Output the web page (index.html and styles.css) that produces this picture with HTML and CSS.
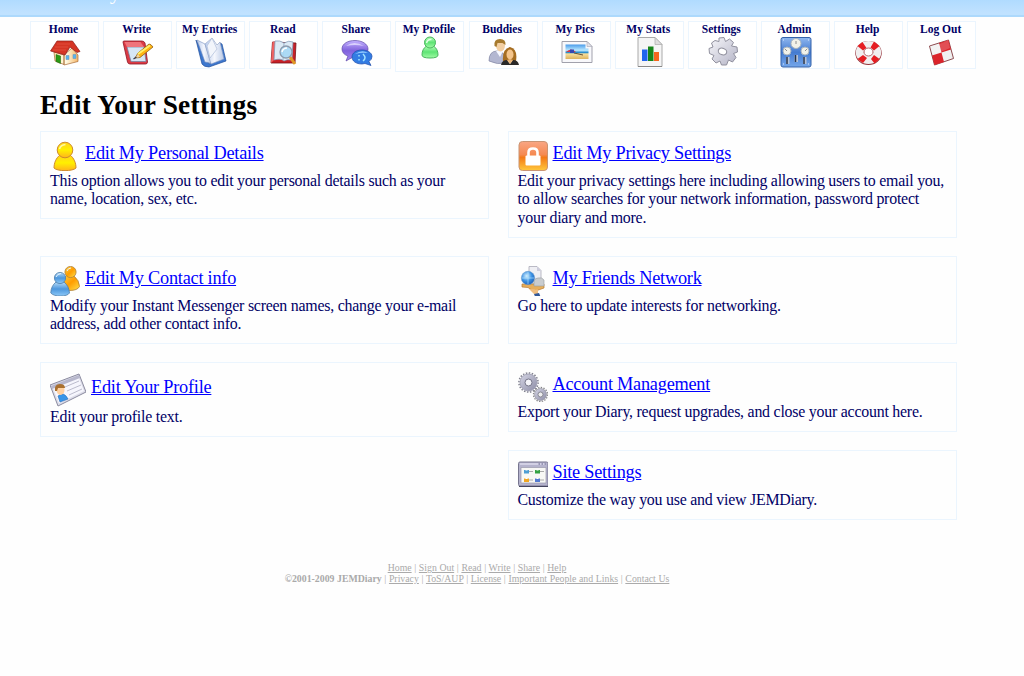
FILE: index.html
```html
<!DOCTYPE html>
<html lang="en">
<head>
<meta charset="utf-8">
<title>JEMDiary - Edit Your Settings</title>
<link rel="stylesheet" href="styles.css">
</head>
<body>
<svg class="defs" width="0" height="0" aria-hidden="true">
  <defs>
    <linearGradient id="gold" x1="0" y1="0" x2="0" y2="1"><stop offset="0" stop-color="#ffd21c"/><stop offset=".5" stop-color="#fff000"/><stop offset="1" stop-color="#ffb31c"/></linearGradient>
    <linearGradient id="amber" x1="0" y1="0" x2="1" y2="1"><stop offset="0" stop-color="#ffd24a"/><stop offset=".5" stop-color="#ff9d00"/><stop offset="1" stop-color="#ffe04a"/></linearGradient>
    <linearGradient id="sky" x1="0" y1="0" x2="0" y2="1"><stop offset="0" stop-color="#b5daf7"/><stop offset=".5" stop-color="#4d97dd"/><stop offset="1" stop-color="#8cc8f7"/></linearGradient>
    <linearGradient id="green" x1="0" y1="0" x2="0" y2="1"><stop offset="0" stop-color="#b6ffb9"/><stop offset=".5" stop-color="#5fe475"/><stop offset="1" stop-color="#a1fba5"/></linearGradient>
    <linearGradient id="orange" x1="0" y1="0" x2="0" y2="1"><stop offset="0" stop-color="#f9a684"/><stop offset=".45" stop-color="#f58a52"/><stop offset=".55" stop-color="#f47a17"/><stop offset="1" stop-color="#ffc83c"/></linearGradient>
    <linearGradient id="steel" x1="0" y1="0" x2="1" y2="1"><stop offset="0" stop-color="#f7f7fb"/><stop offset="1" stop-color="#b4b4c6"/></linearGradient>
    <linearGradient id="gear" x1="0" y1="0" x2="1" y2="1"><stop offset="0" stop-color="#d5d5e5"/><stop offset="1" stop-color="#8d8da6"/></linearGradient>
    <linearGradient id="blue" x1="0" y1="0" x2="0" y2="1"><stop offset="0" stop-color="#8fb7ef"/><stop offset=".5" stop-color="#447bd0"/><stop offset="1" stop-color="#75a7ea"/></linearGradient>
    <linearGradient id="violet" x1="0" y1="0" x2="0" y2="1"><stop offset="0" stop-color="#c2b1ff"/><stop offset=".5" stop-color="#8062dc"/><stop offset="1" stop-color="#a589f4"/></linearGradient>
    <linearGradient id="paper" x1="0" y1="0" x2="1" y2="0"><stop offset="0" stop-color="#b8cbed"/><stop offset=".5" stop-color="#f5f7fd"/><stop offset="1" stop-color="#b9c9e6"/></linearGradient>
    <radialGradient id="globe" cx=".4" cy=".35" r=".7"><stop offset="0" stop-color="#d3f0ff"/><stop offset=".55" stop-color="#3b91e3"/><stop offset="1" stop-color="#1d5cb8"/></radialGradient>
    <linearGradient id="wall" x1="0" y1="0" x2="1" y2="0"><stop offset="0" stop-color="#ffe6ad"/><stop offset=".5" stop-color="#fffbe5"/><stop offset="1" stop-color="#f5b86b"/></linearGradient>
    <linearGradient id="sea" x1="0" y1="0" x2="0" y2="1"><stop offset="0" stop-color="#499bea"/><stop offset=".4" stop-color="#bbe9ff"/><stop offset=".55" stop-color="#298ccd"/><stop offset=".65" stop-color="#f6df9b"/><stop offset="1" stop-color="#ddb35f"/></linearGradient>
  </defs>
</svg>

<header class="banner"><span class="banner-title">JEMDiary</span></header>

<nav class="tabs">
  <a class="tab"><span>Home</span>
    <svg class="icon" viewBox="0 0 30 30"><path d="M4 15 14 18v9.500L5 24zM14 18l8-7 6 7v6.500L14 28z" fill="url(#wall)" stroke="#a86a35" stroke-width=".7"/><path d="M6 17.500l4.500 1.500v7.500L6 24.500z" fill="#2b9a16" stroke="#15610b" stroke-width=".5"/><path d="M7 4h15.500l7.500 10.500-3 1-7-5.500-5 8L.5 14z" fill="#d53524" stroke="#8e1d18" stroke-width=".7"/><path d="M7 7h13M5 10h13M3 13h13" stroke="#ec6552" stroke-width=".5" fill="none"/><path d="M16 18.500h3v4h-3zM23 17.500h3v4h-3z" fill="#56b5ef" stroke="#7899b5" stroke-width=".6"/></svg></a>
  <a class="tab"><span>Write</span>
    <svg class="icon" viewBox="0 0 30 30"><path d="M0 5q0-1 1-1h18q2 0 3 2l2.500 19q0 2-2 2H7q-2 0-2.500-2z" fill="#dc3b45" stroke="#8c1524" stroke-width=".8"/><path d="M4 10h17l2 14.500H8z" fill="#d6e6f5" stroke="#6d7e9e" stroke-width=".7"/><path d="M1.500 5h16l3.500 5H4z" fill="#ef747b"/><path d="m12 21 3-5L26 7q2 0 4 3L17 20.500z" fill="#ffb411" stroke="#8f5e18" stroke-width=".8"/><path d="m15 17 12-8.500" stroke="#fff06a" stroke-width="2"/><path d="m12 21 3-4 2 3z" fill="#ead0a5"/><path d="m10.500 22 3-2" stroke="#334" stroke-width="1.200"/></svg></a>
  <a class="tab"><span>My Entries</span>
    <svg class="icon" viewBox="0 0 30 30"><path d="M0 3 6 27q2 3 7 3l17-6-4-17-2-1 2 14-13 7z" fill="#3d77ce" stroke="#214f9b" stroke-width=".7"/><path d="M1 3l8 4 6 19-6-1z" fill="url(#paper)" stroke="#7790bf" stroke-width=".6"/><path d="M9 7 16 1l5 7 3-3 4 17-13 5z" fill="url(#paper)" stroke="#899cc1" stroke-width=".6"/><path d="m16 1 5 11-7 9-3-12z" fill="#f2f5fb" stroke="#a3b3d4" stroke-width=".6"/></svg></a>
  <a class="tab"><span>Read</span>
    <svg class="icon" viewBox="0 0 30 30"><path d="M3.500 5 2 26h24l1-20z" fill="#c82027" stroke="#741319" stroke-width=".8"/><path d="m3.500 5-1.500 21 3-3L7 4z" fill="#ef6262"/><path d="M6 4q5-1 9 2 5-3 9-1l-1 18q-5-1-8 1-3-3-10-1z" fill="#dceaf5" stroke="#7993b1" stroke-width=".7"/><path d="m15 6-1 17" stroke="#92a9c2" stroke-width=".8"/><path d="m21 20 5 7" stroke="#df9926" stroke-width="3"/><circle cx="17" cy="15" r="6" fill="#a6d8f5" fill-opacity=".9" stroke="#8d9bad" stroke-width="1.300"/><path d="M13 15q1-4 5-4" stroke="#fff" stroke-width="1.500" fill="none"/></svg></a>
  <a class="tab"><span>Share</span>
    <svg class="icon" viewBox="0 0 30 30"><path d="M13 3.500C6 3.500 0 6.500 0 12q0 5 6 7l-2 5 7-4c8 0 15-2 15-8 0-5-6-8.500-13-8.500z" fill="url(#violet)" stroke="#604ba9" stroke-width=".7"/><path d="M4 9q8-6 18 0-9-2-18 0z" fill="#e5deff" opacity=".8"/><path d="M20 13c-6 0-10 3-10 7s4 7 10 7l3-.5 6 2-2-4q3-2 3-5c0-4-5-6.500-10-6.500z" fill="#327ce3" stroke="#204ca9" stroke-width=".7"/><path d="M13 17q7-5 13-1-6-1-13 1z" fill="#91c9ff"/><path d="M17 18v1.500M17 22v1.500M21 17q4 4 0 7" stroke="#a0e2ff" stroke-width="1.500" fill="none"/></svg></a>
  <a class="tab tab-current"><span>My Profile</span>
    <svg class="icon icon-small" viewBox="0 0 22 24"><path d="M14.500 10c3 2 4.500 5 4.500 9q0 3-8 3t-8-3c0-4 1.500-7 4.500-9z" fill="url(#green)" stroke="#49b65d"/><circle cx="11" cy="6.500" r="5.500" fill="url(#green)" stroke="#49b65d"/><path d="M7.500 7q1-4 5-3.500" stroke="#e4ffe4" stroke-width="1.500" fill="none"/></svg></a>
  <a class="tab"><span>Buddies</span>
    <svg class="icon" viewBox="0 0 30 30"><path d="M0 24q0-10 8-10 9 0 9 12-9 2-17-2z" fill="#b3b7d1" stroke="#8185a3" stroke-width=".7"/><path d="m7 14 4 6 3-6z" fill="#f5f7ff"/><ellipse cx="11.500" cy="8.500" rx="4.500" ry="6" fill="#f3cfa2"/><path d="M5.500 9q-1-7 5.500-7 6 0 5.500 6l-3-2-5 0-1 4z" fill="#a77a2e"/><path d="M14 24q-1-12 7-14 8 2 6 14z" fill="#a66d20"/><ellipse cx="21" cy="17.500" rx="3.500" ry="5" fill="#f4c48a"/><path d="M12 28q1-5 6-5l3 4 3-4q5 0 6 5z" fill="#292929"/><path d="m18 23 3 4 3-4-3-1z" fill="#e9b477"/></svg></a>
  <a class="tab"><span>My Pics</span>
    <svg class="icon" viewBox="0 0 30 30"><path d="M0 4.500h25l5 5v16H0z" fill="#f8f8fb" stroke="#a1a1ac"/><path d="M25 4.500v5h5z" fill="#e3e3e9" stroke="#9a9aaa" stroke-width=".5"/><path d="M3.500 7.500h20v4h3V22h-23z" fill="url(#sea)"/><path d="M4 15q5-5 10 0z" fill="#d73547"/><path d="M8 12.500h4V16H8z" fill="#3446b3"/><path d="m12 16 9 2" stroke="#665139"/></svg></a>
  <a class="tab"><span>My Stats</span>
    <svg class="icon" viewBox="0 0 30 30"><path d="M3 .5h17l7 7v22H3z" fill="#f5f5f5" stroke="#aaa"/><path d="M20 .5v7h7z" fill="#ddd" stroke="#aaa" stroke-width=".7"/><path d="M3 29.500h24" stroke="#888"/><path d="M7 12.500h5.500V24H7z" fill="#2165ef"/><path d="M13 9.500h5.500V24H13z" fill="#16851b"/><path d="M19 15h5v9h-5z" fill="#f4661f"/></svg></a>
  <a class="tab"><span>Settings</span>
    <svg class="icon" viewBox="0 0 30 30"><path d="m11 4.500 0-3.500 5-.5 1.500 4 4-2.500 4 3.500-2 3.500 5.500 1 .5 5-4 1.500 2.500 4-3.500 4.500-4-2-2 5h-5l-1.500-4-4 2-4-4 2-3.500-4.500-2-.5-5 4-1.500-1.500-4L7 3.500z" fill="url(#steel)" stroke="#91919f" stroke-linejoin="round"/><ellipse cx="14.500" cy="14.500" rx="4.300" ry="3.300" fill="#fff" stroke="#92929f" stroke-width="1.100" transform="rotate(20 14.500 14.500)"/></svg></a>
  <a class="tab"><span>Admin</span>
    <svg class="icon" viewBox="0 0 30 30"><rect x="0" y=".5" width="30" height="29.500" rx="2" fill="url(#blue)" stroke="#3463aa"/><g fill="#f1f1e9" stroke="#a9b4bd"><circle cx="15" cy="6.500" r="5"/><circle cx="6" cy="14" r="4"/><circle cx="24" cy="14" r="4"/></g><path d="M15 7V4M6 14l-2-2M24 14l2-2" stroke="#777" stroke-width=".8"/><path d="M5 20h3.500v7H5zM13.500 18H17v7h-3.500zM22 20h3.500v7H22z" fill="#b5c2d6"/><path d="M6 20v7M14.500 18v7M23 20v7" stroke="#26354e" stroke-width="1.500"/><path d="M2 3h1M27 3h1M2 27h1M27 27h1" stroke="#dce8ff"/></svg></a>
  <a class="tab"><span>Help</span>
    <svg class="icon" viewBox="0 0 30 30"><ellipse cx="14.500" cy="16" rx="9" ry="7.800" fill="none" stroke="#963239" stroke-width="8.500"/><ellipse cx="14.500" cy="15.500" rx="8.700" ry="7.500" fill="none" stroke="#f0eeef" stroke-width="8"/><path d="m3.500 9 5-4 4 6-3.500 2.500zM20 4.500l5.500 4.500-5.500 4.500-3.500-3zM3.500 22l5.500-4 4 3-4 5zM17 22l3-4 5.500 4-5 4.500z" fill="#e51d22"/><ellipse cx="14.500" cy="15" rx="4.500" ry="4" fill="#fff" stroke="#b6676d"/></svg></a>
  <a class="tab"><span>Log Out</span>
    <svg class="icon" viewBox="0 0 30 30"><path d="M2.500 9 21.500 3l5 18.500-19 6.500z" fill="#f0f0f0" stroke="#8c4b4f"/><path d="m12 6 9.500-3 2.500 9.500-9.500 3zM5 18.500l9.500-3L17 25l-9.500 3z" fill="#db242b"/><path d="M3 9q10-1 18-6l2 8q-10 5-18 5z" fill="#fff" opacity=".2"/></svg></a>
</nav>

<main class="page">
  <h1 class="heading">Edit Your Settings</h1>
  <div class="columns">
    <div class="column">
      <section class="card card-personal">
        <div class="card-title"><svg class="card-icon" viewBox="0 0 30 30"><path d="M20 14c4 3 6 8 6 13-3 3.500-19 3.500-22 0 0-5 2-10 6-13z" fill="url(#gold)" stroke="#cf8a2d"/><circle cx="15" cy="9" r="7.800" fill="url(#gold)" stroke="#cf8a2d"/><path d="M9.500 8q1-4 6-4.500" stroke="#fff7a0" stroke-width="1.500" fill="none"/></svg><a class="link" href="#">Edit My Personal Details</a></div>
        <p class="text">This option allows you to edit your personal details such as your<br>name, location, sex, etc.</p>
      </section>
      <section class="card card-contact">
        <div class="card-title"><svg class="card-icon" viewBox="0 0 30 30"><path d="M23.500 9.500q6 5 6 11-2 4-10 4-8 0-8-4 0-7 5-11z" fill="url(#amber)" stroke="#b08138" stroke-width=".8"/><circle cx="20.500" cy="6" r="5.600" fill="url(#amber)" stroke="#b08138" stroke-width=".8"/><path d="M14 16q5 4 5.500 11-2 3-9 3T.8 27Q1 20 6 16z" fill="url(#sky)" stroke="#4e7da9" stroke-width=".8"/><circle cx="10" cy="12" r="5.600" fill="url(#sky)" stroke="#4e7da9" stroke-width=".8"/><path d="M6 11q1-3 5-3.500M17 5q1-3 4-3" stroke="#e6f5ff" fill="none"/></svg><a class="link" href="#">Edit My Contact info</a></div>
        <p class="text">Modify your Instant Messenger screen names, change your e-mail<br>address, add other contact info.</p>
      </section>
      <section class="card card-profile">
        <div class="card-title"><svg class="card-icon card-icon-wide" viewBox="0 0 36 34"><path d="M0 12 29 1l7 18L8 33z" fill="#dddde9" stroke="#8b8b9f"/><path d="M2 13 28 3l6 15L9 30z" fill="#f6f6fd"/><path d="M1 13 29 2l1 3L2 16z" fill="#b7b7cc"/><path d="m15 14 14-6M17 18l14-6M19 22l13-6" stroke="#bcbccd"/><path d="m8 23q6-5 10 3l-8 3z" fill="#3895e8" stroke="#286db9" stroke-width=".6"/><ellipse cx="10.500" cy="17" rx="4" ry="5" fill="#ffd0a0"/><path d="M5 18q-1-7 5-7 5 0 5 4l-7 0-1 3z" fill="#a9702f"/></svg><a class="link" href="#">Edit Your Profile</a></div>
        <p class="text">Edit your profile text.</p>
      </section>
    </div>
    <div class="column">
      <section class="card card-privacy">
        <div class="card-title"><svg class="card-icon" viewBox="0 0 30 30"><rect x="1" y=".5" width="28.500" height="29" rx="3.500" fill="url(#orange)" stroke="#c99473"/><path d="M10.500 15v-3.500q0-4 4.500-4t4.500 4V15" fill="none" stroke="#fff" stroke-width="2.600"/><rect x="7.500" y="14.500" width="15" height="10" rx="1" fill="#fff"/></svg><a class="link" href="#">Edit My Privacy Settings</a></div>
        <p class="text">Edit your privacy settings here including allowing users to email you,<br>to allow searches for your network information, password protect<br>your diary and more.</p>
      </section>
      <section class="card card-friends">
        <div class="card-title"><svg class="card-icon" viewBox="0 0 30 30"><path d="M11 .5h8l4 4V18H11z" fill="#efeff4" stroke="#a9a9b8" stroke-width=".8"/><path d="M19 .5V5h4z" fill="#ccd"/><path d="M4 18h22v4l-7 2.500-2-1-1 2-6-4-6-.5z" fill="#e7ae5b" stroke="#b67b35" stroke-width=".7"/><path d="m11 23 5 5 4 0 0-4.500z" fill="#f0be80"/><path d="m16 28 5-1 1.500 3.500H17z" fill="#315899"/><circle cx="10" cy="12" r="6.700" fill="url(#globe)" stroke="#6d9dcc" stroke-width=".6"/><path d="M10 6v12M4 12h12" stroke="#bceaff" stroke-width=".6"/><path d="M16 15q1-3 4-3 4-1 6 2v6H16z" fill="#c9cccf" stroke="#969ba0" stroke-width=".6"/></svg><a class="link" href="#">My Friends Network</a></div>
        <p class="text">Go here to update interests for networking.</p>
      </section>
      <section class="card card-account">
        <div class="card-title"><svg class="card-icon" viewBox="0 0 30 30"><circle cx="10.500" cy="10.500" r="9.600" fill="none" stroke="#81818f" stroke-width="1.500" stroke-dasharray="1.500 1.515"/><circle cx="10.500" cy="10.500" r="8.500" fill="url(#gear)" stroke="#9999ad" stroke-width=".8"/><circle cx="10.500" cy="10.500" r="3.500" fill="#f5f5fa" stroke="#77778a"/><circle cx="22.500" cy="22.500" r="7" fill="none" stroke="#858589" stroke-width="1.300" stroke-dasharray="1.400 1.350"/><circle cx="22.500" cy="22.500" r="6" fill="url(#gear)" stroke="#9999a5" stroke-width=".8"/><circle cx="22.500" cy="22.500" r="2.500" fill="#eee" stroke="#777783" stroke-width=".8"/></svg><a class="link" href="#">Account Management</a></div>
        <p class="text">Export your Diary, request upgrades, and close your account here.</p>
      </section>
      <section class="card card-site">
        <div class="card-title"><svg class="card-icon" viewBox="0 0 30 30"><rect x=".5" y="2" width="29.500" height="24" rx="1.500" fill="#b5b3cd" stroke="#77758f"/><path d="M2 4h26" stroke="#d2d0e4" stroke-width="2"/><path d="M20.500 4h1.500M23.500 4H25M26.500 4H28" stroke="#8582a5" stroke-width="1.500"/><path d="M3 7.500h25V23H3z" fill="#f8f8f5" stroke="#9a98ac" stroke-width=".7"/><path d="M11 11.500h4M22 11.500h4M11 20h4M22 20h4" stroke="#aaa"/><path d="M6 10h5v3.500H6z" fill="#4d9ed4"/><path d="M17 10h5v3.500h-5z" fill="#34a243"/><path d="M6 18.500h5V22H6z" fill="#f1a621"/><path d="M17 18.500h5V22h-5z" fill="#537ad1"/><path d="M7.500 10h2M18.500 10h2M7.500 18.500h2M18.500 18.500h2" stroke="#fff"/><path d="M1 26.500h29" stroke="#45455f"/></svg><a class="link" href="#">Site Settings</a></div>
        <p class="text">Customize the way you use and view JEMDiary.</p>
      </section>
    </div>
  </div>
</main>

<footer class="footer">
  <div><a href="#">Home</a> | <a href="#">Sign Out</a> | <a href="#">Read</a> | <a href="#">Write</a> | <a href="#">Share</a> | <a href="#">Help</a></div>
  <div><b>©2001-2009 JEMDiary</b> | <a href="#">Privacy</a> | <a href="#">ToS/AUP</a> | <a href="#">License</a> | <a href="#">Important People and Links</a> | <a href="#">Contact Us</a></div>
</footer>
</body>
</html>
```

FILE: styles.css
```css
* { box-sizing: border-box; }

body {
  margin: 0;
  height: 676px;
  overflow: hidden;
  background: #fefefe;
  font-family: "Liberation Serif", "Times New Roman", serif;
}

.defs { display: block; }

.banner {
  display: flex;
  align-items: flex-end;
  height: 17px;
  padding: 0 0 13px 29px;
  overflow: hidden;
  background: linear-gradient(#b0dbff, #c0e2ff 85%);
  border-bottom: 2px solid #add9fc;
}

.banner-title {
  font-size: 22px;
  line-height: 20px;
  color: #fff;
}

.tabs {
  display: flex;
  align-items: flex-start;
  gap: 4.1px;
  height: 55px;
  padding: 4px 0 0 30px;
}

.tab {
  display: flex;
  flex: none;
  flex-direction: column;
  align-items: center;
  width: 69px;
  height: 48px;
  border: 1px solid #ebf5fe;
  background: #fff;
  padding: 1px 2px 0 0;
  color: #000066;
  font-size: 11.5px;
  font-weight: bold;
  line-height: 13px;
  white-space: nowrap;
}

.tab-current { height: 51px; }

.icon {
  display: block;
  flex: none;
  width: 30px;
  height: 30px;
  margin: 1px 0 0 3px;
  overflow: visible;
}

.icon-small {
  width: 22px;
  height: 24px;
  margin: 0 0 0 2px;
}

.page { padding: 17px 0 0 40px; }

.heading {
  margin: 0;
  height: 42px;
  font-size: 27.400px;
  line-height: 32px;
  letter-spacing: .24px;
}

.columns {
  display: flex;
  gap: 18.500px;
  height: 388px;
}

.column {
  display: flex;
  flex-direction: column;
  width: 449px;
}

.card {
  flex: none;
  border: 1px solid #ebf5fe;
  padding: 9px;
}

.card-personal { height: 88px; margin-bottom: 37px; }
.card-contact { height: 88px; margin-bottom: 18px; }
.card-profile { height: 75px; }
.card-privacy { height: 107px; margin-bottom: 18px; }
.card-friends { height: 88px; margin-bottom: 18px; }
.card-account { height: 70px; margin-bottom: 18px; }
.card-site { height: 70px; }

.card-title {
  display: flex;
  gap: 5px;
  height: 30.500px;
}

.card-profile .card-title { height: 35.500px; }
.card-profile .link { margin-top: 3px; }

.card-icon {
  flex: none;
  width: 30px;
  height: 30px;
}

.card-icon-wide {
  width: 36px;
  height: 34px;
  margin-top: 1px;
}

.link {
  height: 25px;
  color: #0000ff;
  font-size: 18.300px;
  line-height: 25px;
  letter-spacing: -.24px;
  white-space: nowrap;
}

.text {
  margin: 0;
  color: #000066;
  font-size: 15.900px;
  line-height: 18.500px;
  letter-spacing: -.23px;
  white-space: nowrap;
}

.footer {
  width: 954px;
  margin-top: 44px;
  color: #aaa;
  font-size: 9.800px;
  line-height: 10.700px;
  word-spacing: .18px;
  text-align: center;
}

.footer a { color: #aaa; }
```
